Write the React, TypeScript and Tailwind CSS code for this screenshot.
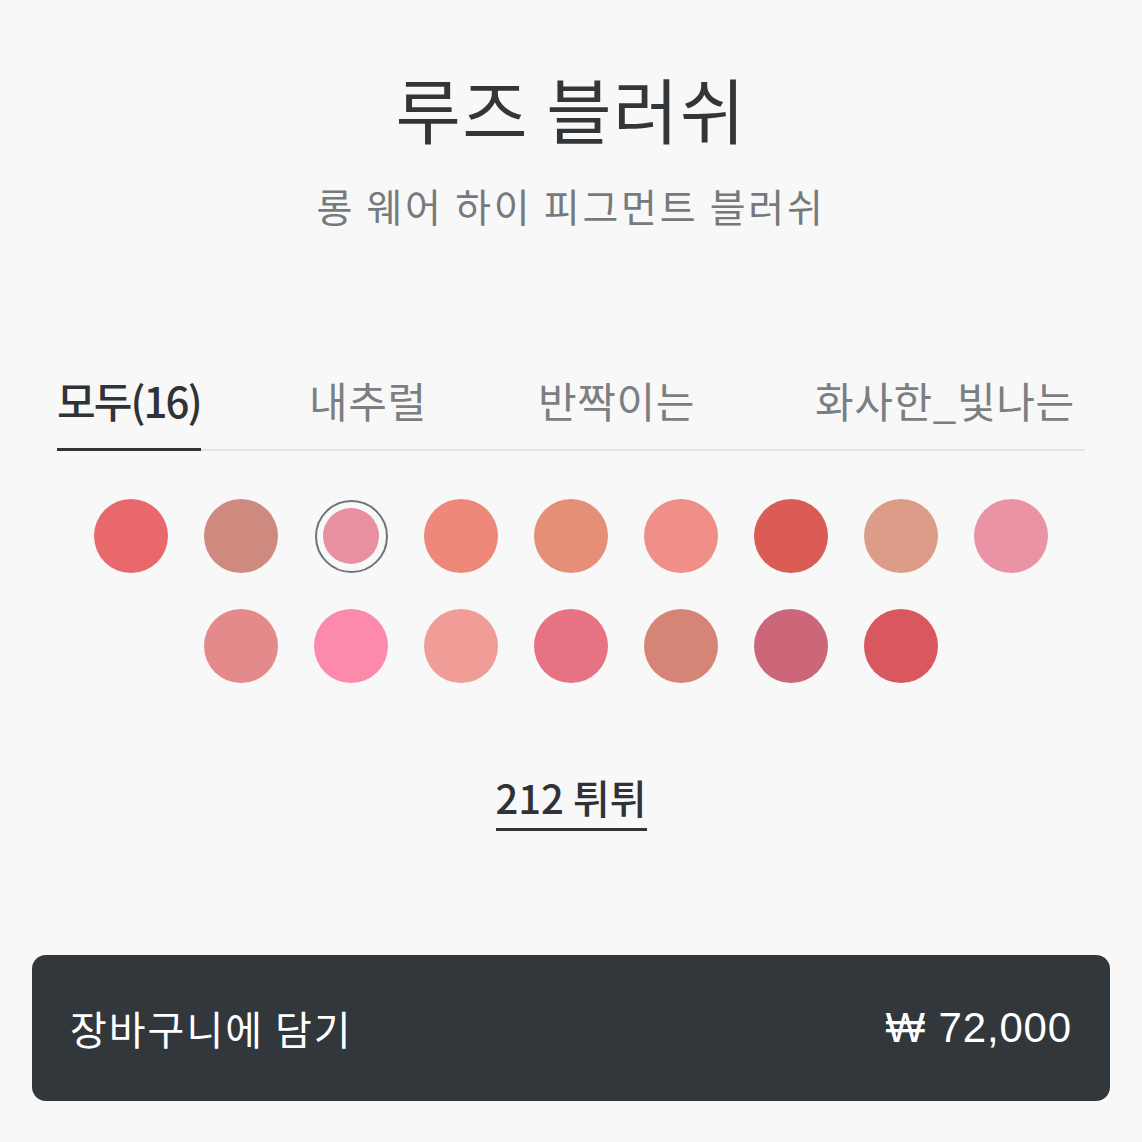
const SWATCHES = [
  "#e9686b",
  "#cf8a80",
  "#e8909f",
  "#ee887b",
  "#e68f78",
  "#f08f88",
  "#db5c55",
  "#dd9c88",
  "#ea93a4",
  "#e58a8a",
  "#fd8aaa",
  "#ef9d96",
  "#e67284",
  "#d48575",
  "#cc6679",
  "#d9575e",
];

// each slot is sized so the labels start where the reference puts them
const TABS = [
  { label: "모두(16)", slot: "w-[252px]" },
  { label: "내추럴", slot: "w-[229px]" },
  { label: "반짝이는", slot: "w-[277px]" },
  { label: "화사한_빛나는", slot: "flex-1" },
];

export default function App() {
  return (
    <div
      className="flex min-h-[1142px] w-[1142px] flex-col items-center bg-[#f8f8f8] text-[#333639]"
      style={{ fontFamily: '"Noto Sans CJK KR", "Noto Sans", sans-serif' }}
    >
      <h1 className="mt-[59px] text-[71px] leading-[96px] tracking-[0.02em]">루즈 블러쉬</h1>
      <p className="mt-[23px] text-[39px] leading-[54px] tracking-[0.07em] text-[#777a7c]">
        롱 웨어 하이 피그먼트 블러쉬
      </p>

      <nav className="mt-[143px] flex w-[1028px] border-b-2 border-[#e3e4e5]">
        {TABS.map((tab, i) => (
          <div key={tab.label} className={`${tab.slot} flex`}>
            <button
              className={
                i === 0
                  ? "-mb-[2px] border-b-[3px] border-[#2f3336] pb-[23px] text-[42px] font-medium leading-[50px] tracking-[-0.045em] text-[#2f3336]"
                  : "-mb-[2px] border-b-[3px] border-transparent pb-[23px] text-[42px] leading-[50px] tracking-[0.015em] text-[#7b7f82]"
              }
            >
              {tab.label}
            </button>
          </div>
        ))}
      </nav>

      <div className="mt-[30px] flex w-[990px] flex-wrap justify-center">
        {SWATCHES.map((color, i) => (
          <div key={i} className="flex h-[110px] w-[110px] items-center justify-center">
            {i === 2 ? (
              <div className="flex h-[73px] w-[73px] items-center justify-center rounded-full border-2 border-[#6f7577]">
                <div className="h-[56px] w-[56px] rounded-full" style={{ backgroundColor: color }} />
              </div>
            ) : (
              <div className="h-[74px] w-[74px] rounded-full" style={{ backgroundColor: color }} />
            )}
          </div>
        ))}
      </div>

      <div className="mt-[71px] border-b-[3px] border-[#2f3336] pb-[6px] text-[40px] font-medium leading-[50px] text-[#2f3336]">
        212 튀튀
      </div>

      <button className="mt-[124px] flex h-[146px] w-[1078px] items-center justify-between rounded-[14px] bg-[#32373c] px-[38px] text-white">
        <span className="text-[40px] leading-[50px] tracking-[0.05em]">장바구니에 담기</span>
        <span
          className="text-[42px] leading-[50px] tracking-[0.02em]"
          style={{ fontFamily: '"Liberation Sans", "Noto Sans CJK KR", sans-serif' }}
        >
          ₩ 72,000
        </span>
      </button>
    </div>
  );
}
